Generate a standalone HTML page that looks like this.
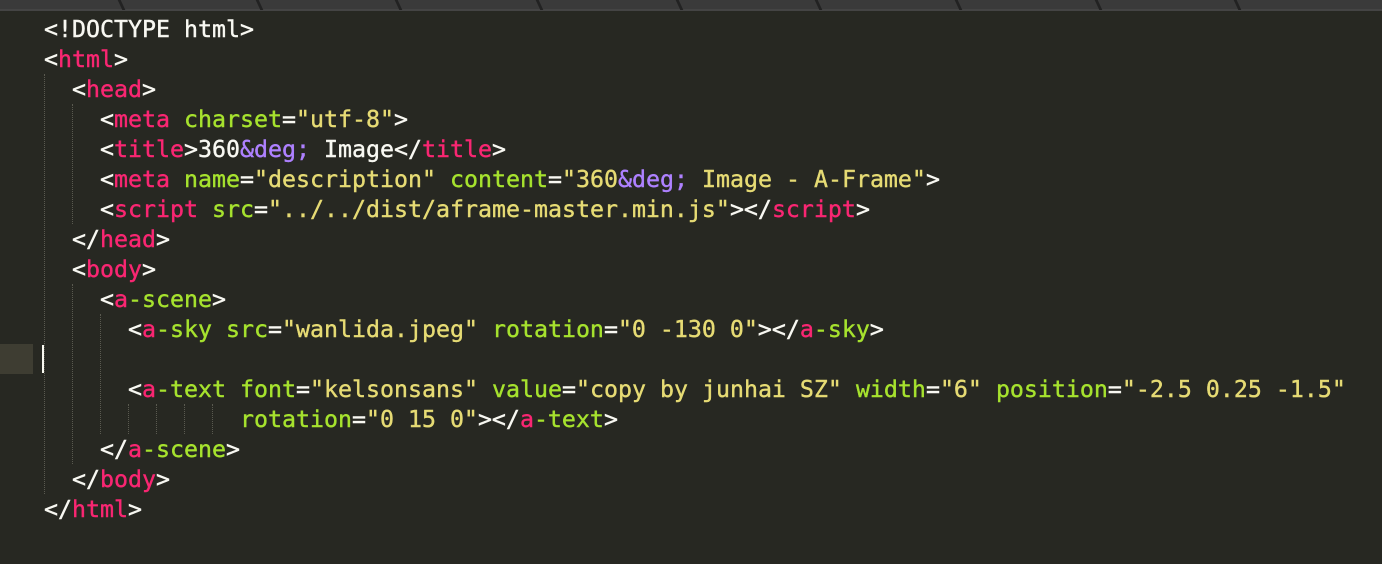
<!DOCTYPE html>
<html><head><style>
body{margin:0;width:1382px;height:564px;background:#272822;overflow:hidden;position:relative;font-family:"DejaVu Sans Mono","Liberation Mono",monospace;}
.tabs{position:absolute;left:0;top:0;width:1382px;height:9px;background:#3a3a3a;border-bottom:2px solid #444;}
.sep{position:absolute;top:0;width:3px;height:10px;background:#222;transform:skewX(25deg);}
.code{position:absolute;left:44px;top:15px;font-size:23.25px;line-height:30px;color:#F8F8F2;white-space:pre;letter-spacing:0;-webkit-text-stroke:0.4px currentColor;}
.t{color:#F92672}.a{color:#A6E22E}.s{color:#E6DB74}.e{color:#AE81FF}
.g{position:absolute;width:0;border-left:1px dotted #5a5a50;}
</style></head><body>
<div class="tabs">
<div class="sep" style="left:120px"></div><div class="sep" style="left:258px"></div><div class="sep" style="left:397px"></div><div class="sep" style="left:538px"></div><div class="sep" style="left:678px"></div><div class="sep" style="left:817px"></div><div class="sep" style="left:957px"></div><div class="sep" style="left:1097px"></div><div class="sep" style="left:1236px"></div>
</div>
<div style="position:absolute;left:0;top:344px;width:33px;height:30px;background:#3e3d32"></div>
<div style="position:absolute;left:42px;top:345px;width:2px;height:28px;background:#f8f8f0"></div>
<div class="g" style="left:44px;top:74px;height:420px"></div>
<div class="g" style="left:72px;top:104px;height:120px"></div>
<div class="g" style="left:72px;top:284px;height:180px"></div>
<div class="g" style="left:100px;top:314px;height:120px"></div>
<div class="g" style="left:128px;top:404px;height:30px"></div>
<div class="g" style="left:156px;top:404px;height:30px"></div>
<div class="g" style="left:184px;top:404px;height:30px"></div>
<div class="g" style="left:212px;top:404px;height:30px"></div>
<div class="code">&lt;!DOCTYPE html&gt;
&lt;<span class="t">html</span>&gt;
  &lt;<span class="t">head</span>&gt;
    &lt;<span class="t">meta</span> <span class="a">charset</span>=<span class="s">"utf-8"</span>&gt;
    &lt;<span class="t">title</span>&gt;360<span class="e">&amp;deg;</span> Image&lt;/<span class="t">title</span>&gt;
    &lt;<span class="t">meta</span> <span class="a">name</span>=<span class="s">"description"</span> <span class="a">content</span>=<span class="s">"360<span class="e">&amp;deg;</span> Image - A-Frame"</span>&gt;
    &lt;<span class="t">script</span> <span class="a">src</span>=<span class="s">"../../dist/aframe-master.min.js"</span>&gt;&lt;/<span class="t">script</span>&gt;
  &lt;/<span class="t">head</span>&gt;
  &lt;<span class="t">body</span>&gt;
    &lt;<span class="t">a</span><span class="a">-scene</span>&gt;
      &lt;<span class="t">a</span><span class="a">-sky</span> <span class="a">src</span>=<span class="s">"wanlida.jpeg"</span> <span class="a">rotation</span>=<span class="s">"0 -130 0"</span>&gt;&lt;/<span class="t">a</span><span class="a">-sky</span>&gt;

      &lt;<span class="t">a</span><span class="a">-text</span> <span class="a">font</span>=<span class="s">"kelsonsans"</span> <span class="a">value</span>=<span class="s">"copy by junhai SZ"</span> <span class="a">width</span>=<span class="s">"6"</span> <span class="a">position</span>=<span class="s">"-2.5 0.25 -1.5"</span>
              <span class="a">rotation</span>=<span class="s">"0 15 0"</span>&gt;&lt;/<span class="t">a</span><span class="a">-text</span>&gt;
    &lt;/<span class="t">a</span><span class="a">-scene</span>&gt;
  &lt;/<span class="t">body</span>&gt;
&lt;/<span class="t">html</span>&gt;
</div>
</body></html>
